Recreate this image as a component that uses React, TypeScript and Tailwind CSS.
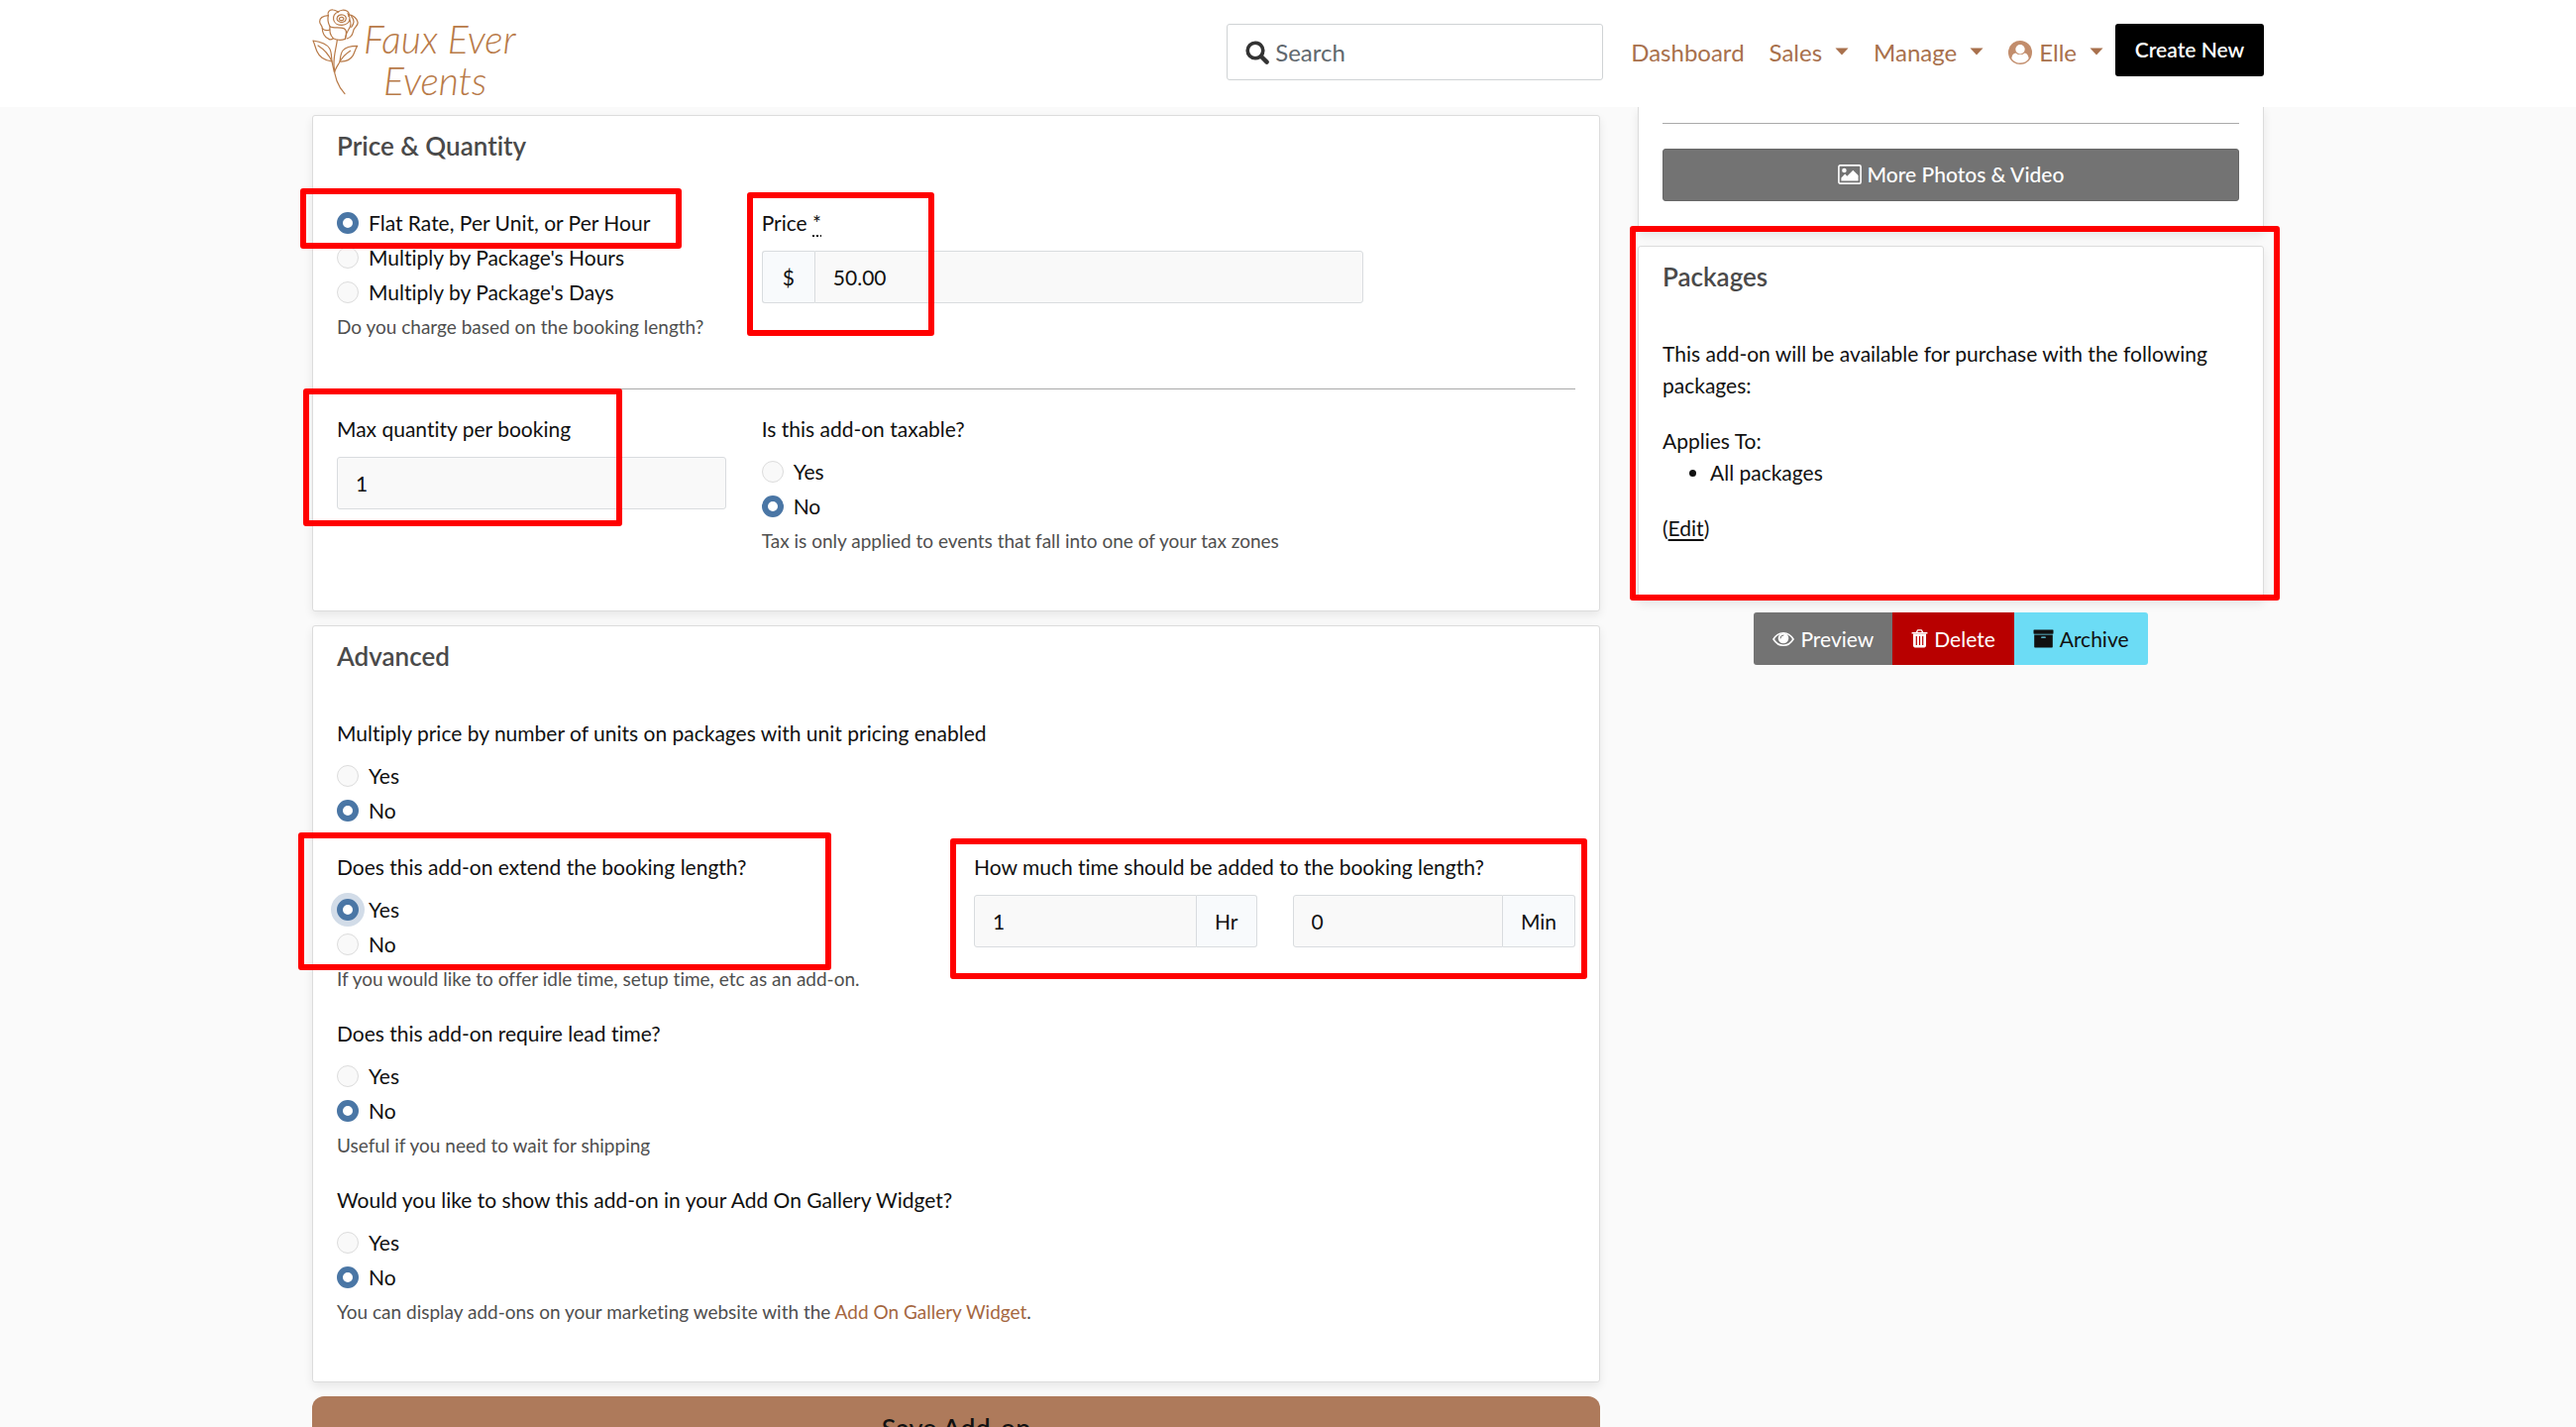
import { useState, type ReactNode } from "react";

type IconProps = { className?: string };

function SearchIcon({ className }: IconProps) {
  return (
    <svg viewBox="0 0 24 24" className={className} fill="none" stroke="currentColor" aria-hidden="true">
      <circle cx="10" cy="10" r="7.8" strokeWidth="3.6" />
      <path d="M16 16l5.6 5.6" strokeWidth="4.4" strokeLinecap="round" />
    </svg>
  );
}

function UserIcon({ className }: IconProps) {
  return (
    <svg viewBox="0 0 24 24" className={className} aria-hidden="true">
      <circle cx="12" cy="12" r="12" fill="currentColor" />
      <path
        d="M12 22.6c-3.7 0-6.9-1.7-8.7-4.6.4-3.3 1.800-5.200 4.200-5.600 1.200 1 2.800 1.700 4.500 1.700s3.300-.7 4.500-1.700c2.400.4 3.800 2.300 4.200 5.600-1.800 2.900-5 4.600-8.700 4.600z"
        fill="#fff"
      />
      <circle cx="12" cy="8.8" r="5.4" fill="currentColor" />
      <circle cx="12" cy="8.8" r="4.7" fill="#fff" />
    </svg>
  );
}

function PictureIcon({ className }: IconProps) {
  return (
    <svg viewBox="0 0 24 20" className={className} aria-hidden="true">
      <rect x="0.9" y="0.9" width="22.2" height="18.2" rx="1.4" fill="none" stroke="currentColor" strokeWidth="1.6" />
      <circle cx="6.4" cy="6" r="2.3" fill="currentColor" />
      <path d="M3.4 16.600v-3.200l3.800-3.800 2.100 2.100 6-6 5.300 5.300v5.600z" fill="currentColor" />
    </svg>
  );
}

function EyeIcon({ className }: IconProps) {
  return (
    <svg viewBox="0 0 22 16" className={className} aria-hidden="true">
      <path d="M1 8c2.300-3.800 5.900-6.300 10-6.300S18.700 4.200 21 8c-2.300 3.800-5.900 6.300-10 6.300S3.300 11.800 1 8z" fill="none" stroke="currentColor" strokeWidth="1.6" />
      <circle cx="11" cy="7" r="5.3" fill="currentColor" />
      <path d="M8 7a3 3 0 0 1 3-3" fill="none" stroke="#737373" strokeWidth="1" strokeLinecap="round" />
    </svg>
  );
}

function TrashIcon({ className }: IconProps) {
  return (
    <svg viewBox="0 0 17 19" className={className} aria-hidden="true">
      <path d="M5.400 3.400l.9-2.100c.1-.3.3-.4.600-.4h3.200c.3 0 .5.1.6.4l.9 2.100" fill="none" stroke="currentColor" strokeWidth="1.4" />
      <rect x="0.5" y="3" width="16" height="1.6" rx="0.4" fill="currentColor" />
      <path d="M2 4.500h13v11.800c0 1.300-.8 2.200-1.800 2.200H3.800c-1 0-1.800-.9-1.800-2.200z" fill="currentColor" />
      <path d="M5.300 7v9M8.500 7v9M11.700 7v9" stroke="#b80000" strokeWidth="1.2" />
    </svg>
  );
}

function ArchiveIcon({ className }: IconProps) {
  return (
    <svg viewBox="0 0 21 19" className={className} fill="currentColor" aria-hidden="true">
      <rect x="0.5" y="0.5" width="20" height="4.2" rx="0.6" />
      <path
        fillRule="evenodd"
        d="M1.200 5.400h18.600v12.400c0 .4-.3.700-.7.700H1.900c-.4 0-.7-.3-.7-.7zM8.800 7.400c-.9 0-.9 1.400 0 1.400h3.400c.9 0 .9-1.400 0-1.400z"
      />
    </svg>
  );
}

function Caret() {
  return (
    <svg viewBox="0 0 14 8" className="mb-0.5 ml-[13px] h-2 w-3.5" fill="currentColor" aria-hidden="true">
      <path d="M0.500 0.500h13L7 7.500z" />
    </svg>
  );
}

function Rose({ className }: IconProps) {
  return (
    <svg viewBox="44 22 144 264" className={className} fill="none" stroke="currentColor" strokeWidth="3.6" strokeLinecap="round" strokeLinejoin="round" aria-hidden="true">
      <path d="M93 45c-4-10 4-19 15-17 7 1 11 4 15 6 6-6 18-7 26-3 7 4 8 10 5 16" />
      <path d="M93 45c-14 1-26 7-26 18 0 9 8 12 8 21 0 12 6 28 21 33" />
      <path d="M154 42c14 3 25 12 28 22 3 9-6 14-11 22-3 6-3 14-8 20-4 6-9 8-14 9" />
      <path d="M93 45c-3 12 0 24 5 33M124 34c-10 3-17 12-15 24 2 10 13 16 25 16 14-1 24-9 24-20 0-8-2-12-6-15" />
      <path d="M119 55c1-9 9-14 18-12 8 2 12 8 9 15-3 7-12 9-19 6-5-2-8-5-8-9z" />
      <path d="M126 56c0-4 4-7 9-6 4 1 6 4 4 7-2 4-13 4-13-1z" />
      <path d="M98 78c-2 14 2 28 10 36 10 5 26 6 36 2 4-12 6-28-4-32-13-4-32 0-42-6z" />
      <path d="M158 58c5 10 2 22-4 30-4 6-8 14-10 28M163 48c8 8 9 20 0 32M75 84c8 8 14 8 23 4M96 117c4 1 8 0 12-3" />
      <path d="M120 119c-3 24-11 46-10 76 1 38 14 66 33 87" />
      <path d="M47 121c20 3 41 8 50 24 7 12 5 26 7 39-22-3-38-14-45-30-5-11-7-22-12-33z" />
      <path d="M62 136c16 10 32 26 42 48l7 32" />
      <path d="M181 137c-18 0-36 4-44 14-7 9-7 20-9 33 16 1 32-6 39-17 6-9 7-20 14-30z" />
      <path d="M160 152c-16 10-28 24-35 38-6 10-11 18-13 26" />
    </svg>
  );
}

function Mark({ className }: { className: string }) {
  return (
    <div
      aria-hidden="true"
      className={`pointer-events-none absolute z-10 rounded-[3px] border-[6px] border-[#ff0000] ${className}`}
    />
  );
}

function Card({ title, children }: { title: string; children: ReactNode }) {
  return (
    <section className="rounded-[3px] border border-[#dcdcdc] bg-white px-6 pt-[14px] pb-14 shadow-[0_4px_10px_rgba(0,0,0,0.08)]">
      <h2 className="mb-[46px] text-[26px] leading-8 font-semibold text-[#4a4a4a]">{title}</h2>
      {children}
    </section>
  );
}

type RadioGroupProps = {
  name: string;
  options?: string[];
  initial: string;
  legend?: string;
  hint?: ReactNode;
  focused?: boolean;
};

function RadioGroup({ name, options = ["Yes", "No"], initial, legend, hint, focused }: RadioGroupProps) {
  const [value, setValue] = useState(initial);

  return (
    <fieldset>
      {legend && <legend className="mb-[11px] whitespace-nowrap">{legend}</legend>}
      <div className="flex flex-col gap-[3px]">
        {options.map((option) => (
          <label key={option} className="flex items-center gap-[10px]">
            <input
              type="radio"
              name={name}
              checked={value === option}
              onChange={() => setValue(option)}
              className={`size-[22px] shrink-0 appearance-none rounded-full border border-[#dcdcdc] bg-[#f9f9f9] checked:border-[6px] checked:border-[#4a76a5] checked:bg-white ${
                focused && value === option ? "ring-[6px] ring-[#d2dce8]" : ""
              }`}
            />
            {option}
          </label>
        ))}
      </div>
      {hint && <p className="mt-[5px] text-[19px] leading-7 text-[#4f4f4f]">{hint}</p>}
    </fieldset>
  );
}

const inputClass = "h-[53px] w-full min-w-0 border border-[#d9dcdf] bg-[#f9f9f9] px-[18px] outline-none";
const addonClass = "flex shrink-0 items-center border border-[#d9dcdf] bg-[#f8fafc]";

function NavLink({ children, caret }: { children: ReactNode; caret?: boolean }) {
  return (
    <a href="#" className="flex items-center text-[24px] leading-8">
      {children}
      {caret && <Caret />}
    </a>
  );
}

function Header() {
  return (
    <header className="relative z-20 bg-white">
      <div className="mx-auto flex h-[108px] max-w-[1970px] items-start justify-between">
        <a href="#" aria-label="Faux Ever Events" className="flex pt-2 text-[#b87a48]">
          <Rose className="h-[88px] w-12" />
          <span className="flex flex-col pt-[10px] pl-1 text-[39px] leading-[42px] font-light italic">
            <span>Faux Ever</span>
            <span className="pl-5">Events</span>
          </span>
        </a>
        <div className="flex items-start">
          <label className="mt-6 mr-7 flex h-[57px] w-[380px] items-center gap-[6px] rounded-[3px] border border-[#d0d3d5] px-[18px]">
            <SearchIcon className="size-6 shrink-0 text-[#333]" />
            <input
              type="search"
              placeholder="Search"
              aria-label="Search"
              className="w-full min-w-0 text-[24px] outline-none placeholder:text-[#60686e]"
            />
          </label>
          <nav className="mt-[37px] flex gap-[25px] text-[#a8704c]">
            <NavLink>Dashboard</NavLink>
            <NavLink caret>Sales</NavLink>
            <NavLink caret>Manage</NavLink>
            <NavLink caret>
              <UserIcon className="mr-[7px] size-6 text-[#c28d6c]" />
              Elle
            </NavLink>
          </nav>
          <button className="mt-6 ml-3 h-[53px] w-[150px] rounded-[3px] bg-black pb-0.5 text-[21px] font-semibold text-white">
            Create New
          </button>
        </div>
      </div>
    </header>
  );
}

function PriceCard() {
  return (
    <Card title="Price & Quantity">
      <div className="grid grid-cols-12 gap-x-9">
        <div className="relative col-span-4">
          <Mark className="-top-[19px] -left-[37px] h-[61px] w-[385px]" />
          <RadioGroup
            name="rate"
            options={["Flat Rate, Per Unit, or Per Hour", "Multiply by Package's Hours", "Multiply by Package's Days"]}
            initial="Flat Rate, Per Unit, or Per Hour"
            hint="Do you charge based on the booking length?"
          />
        </div>
        <div className="relative col-span-6">
          <Mark className="-top-[15px] -left-[15px] h-[145px] w-[189px]" />
          <label htmlFor="price" className="mb-3 block">
            Price{" "}
            <abbr title="required" className="underline decoration-dotted underline-offset-4">
              *
            </abbr>
          </label>
          <div className="flex">
            <span className={`${addonClass} rounded-l-[3px] border-r-0 px-5`}>$</span>
            <input id="price" defaultValue="50.00" className={`${inputClass} rounded-r-[3px]`} />
          </div>
        </div>
      </div>
      <hr className="mt-12 mb-6 border-[#aaa]" />
      <div className="grid grid-cols-12 gap-x-9">
        <div className="relative col-span-4">
          <Mark className="-top-[25px] -left-[34px] h-[139px] w-[322px]" />
          <label htmlFor="max-quantity" className="mb-3 block">
            Max quantity per booking
          </label>
          <input id="max-quantity" defaultValue="1" className={`${inputClass} rounded-[3px]`} />
        </div>
        <div className="col-span-8">
          <RadioGroup
            name="taxable"
            legend="Is this add-on taxable?"
            initial="No"
            hint="Tax is only applied to events that fall into one of your tax zones"
          />
        </div>
      </div>
    </Card>
  );
}

function AdvancedCard() {
  return (
    <Card title="Advanced">
      <div className="flex flex-col gap-[25px]">
        <RadioGroup name="multiply" legend="Multiply price by number of units on packages with unit pricing enabled" initial="No" />
        <div className="grid grid-cols-12 gap-x-9">
          <div className="relative col-span-6">
            <Mark className="-top-[19px] -left-[39px] h-[139px] w-[538px]" />
            <RadioGroup
              name="extend"
              legend="Does this add-on extend the booking length?"
              initial="Yes"
              hint="If you would like to offer idle time, setup time, etc as an add-on."
              focused
            />
          </div>
          <div className="relative col-span-6">
            <Mark className="-top-[13px] -right-3 -left-6 h-[142px]" />
            <fieldset>
              <legend className="mb-3 whitespace-nowrap">How much time should be added to the booking length?</legend>
              <div className="grid grid-cols-2 gap-x-9">
                <label className="flex">
                  <input defaultValue="1" className={`${inputClass} rounded-l-[3px]`} />
                  <span className={`${addonClass} rounded-r-[3px] border-l-0 px-[18px]`}>Hr</span>
                </label>
                <label className="flex">
                  <input defaultValue="0" className={`${inputClass} rounded-l-[3px]`} />
                  <span className={`${addonClass} rounded-r-[3px] border-l-0 px-[18px]`}>Min</span>
                </label>
              </div>
            </fieldset>
          </div>
        </div>
        <RadioGroup
          name="lead"
          legend="Does this add-on require lead time?"
          initial="No"
          hint="Useful if you need to wait for shipping"
        />
        <RadioGroup
          name="widget"
          legend="Would you like to show this add-on in your Add On Gallery Widget?"
          initial="No"
          hint={
            <>
              You can display add-ons on your marketing website with the{" "}
              <a href="#" className="text-[#a5673f]">
                Add On Gallery Widget
              </a>
              .
            </>
          }
        />
      </div>
    </Card>
  );
}

function Sidebar() {
  return (
    <aside className="w-[632px] shrink-0">
      <section className="mb-[14px] rounded-b-[3px] border border-t-0 border-[#dcdcdc] bg-white px-6 pt-4 pb-[30px] shadow-[0_4px_10px_rgba(0,0,0,0.08)]">
        <hr className="mb-[25px] border-[#aaa]" />
        <button className="flex h-[53px] w-full items-center justify-center gap-[6px] rounded-[3px] border border-[#666] bg-[#737373] pb-0.5 font-medium text-white">
          <PictureIcon className="h-5 w-6" />
          More Photos &amp; Video
        </button>
      </section>
      <div className="relative">
        <Mark className="-top-5 -right-4 bottom-0 -left-2" />
        <Card title="Packages">
          <p className="mb-6">This add-on will be available for purchase with the following packages:</p>
          <p>Applies To:</p>
          <ul className="mb-6 list-disc pl-12">
            <li>All packages</li>
          </ul>
          <p>
            (
            <a href="#" className="underline underline-offset-3">
              Edit
            </a>
            )
          </p>
        </Card>
      </div>
      <div className="mt-3 flex justify-center">
        <button className="flex h-[53px] items-center gap-[6px] rounded-l-[3px] bg-[#737373] px-[19px] text-white">
          <EyeIcon className="h-4 w-[22px]" />
          Preview
        </button>
        <button className="flex h-[53px] items-center gap-[6px] bg-[#b80000] px-[19px] text-white">
          <TrashIcon className="h-[19px] w-[17px]" />
          Delete
        </button>
        <button className="flex h-[53px] items-center gap-[6px] rounded-r-[3px] bg-[#6cdcf5] px-[19px]">
          <ArchiveIcon className="h-[19px] w-[21px]" />
          Archive
        </button>
      </div>
    </aside>
  );
}

export default function App() {
  return (
    <div className="h-screen overflow-hidden bg-[#fafafa] font-['Lato','Open_Sans',sans-serif] text-[21px] leading-8 text-[#111] [font-variant-ligatures:none]">
      <Header />
      <main className="mx-auto flex max-w-[1970px] items-start gap-[38px]">
        <div className="flex min-w-0 flex-1 flex-col gap-[14px] pt-2">
          <PriceCard />
          <AdvancedCard />
          <button className="h-16 rounded-xl bg-[#ae7a5b] text-[27px] font-medium">Save Add-on</button>
        </div>
        <Sidebar />
      </main>
    </div>
  );
}
